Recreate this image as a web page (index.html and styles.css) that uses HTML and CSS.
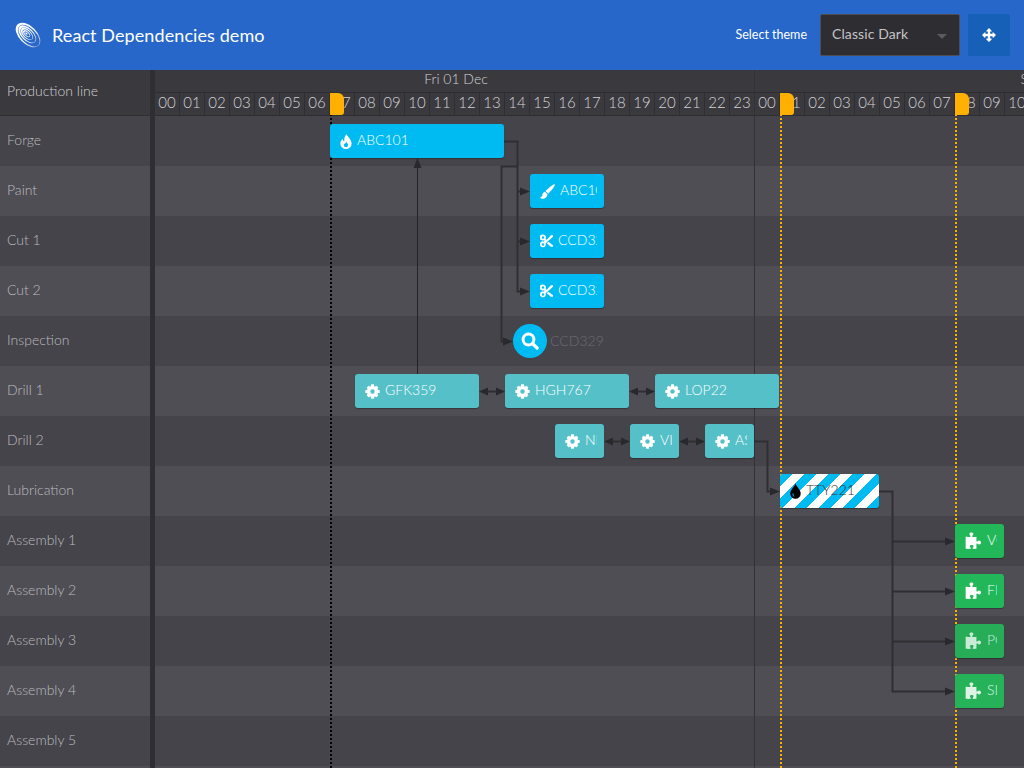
FILE: index.html
```html
<!DOCTYPE html>
<html lang="en">
<head>
<meta charset="utf-8">
<title>React Dependencies demo</title>
<link rel="stylesheet" href="styles.css">
</head>
<body>
<svg class="defs" aria-hidden="true">
  <defs>
    <linearGradient id="logoGrad" x1="0" y1="0" x2="1" y2="0">
      <stop offset="0" stop-color="#ffffff"/><stop offset="0.55" stop-color="#f2f5fa"/><stop offset="1" stop-color="#aab4c4"/>
    </linearGradient>
  </defs>
  <symbol id="i-fire" viewBox="0 0 22 28"><path fill-rule="evenodd" d="M12 0c1 5 9.500 9 9.500 18a10.500 10 0 0 1-21 0c0-4 2-7 4.500-9 0 3 1 4 3 5C7 9 9 3 12 0zM11 24.500a4 4 0 0 0 4-4c0-2-2.500-3.500-3.500-6-.5 2.500-4.500 3.500-4.500 6.500a4 4 0 0 0 4 3.500z"/></symbol>
  <symbol id="i-brush" viewBox="0 0 24 24"><path d="M23.200.5c.9.800.6 2-.2 3.200C20 8.500 15.800 13.300 13.200 15.500L8.800 11.300C11.800 8 17.300 3 20.800 1 21.800.3 22.700 0 23.200.5zM7.800 12.500l4.200 4c-.2 4.300-3.300 7-7 7-2.200 0-4.200-.8-5-2.400 1.600 0 3.300-.8 3.600-2.800.3-2.800 1.900-5.200 4.200-5.800z"/></symbol>
  <symbol id="i-cut" viewBox="0 0 24 24"><path fill-rule="evenodd" d="M5.500 0a5.500 5.500 0 0 1 4.700 8.300l2.400 1.500L20 1.500h4v2.500L10.500 16.300A5.500 5.500 0 1 1 7 12.800l1.800-1.300L7 10.500A5.500 5.500 0 1 1 5.500 0zM5.500 3.300a2.200 2.200 0 1 0 0 4.400 2.200 2.200 0 0 0 0-4.400zM5.500 16.300a2.200 2.200 0 1 0 0 4.400 2.200 2.200 0 0 0 0-4.400zM15.500 13.500L24 20v2.500h-4l-7.500-6.300z"/></symbol>
  <symbol id="i-search" viewBox="0 0 24 24"><circle cx="10" cy="10" r="7.200" fill="none" stroke="currentColor" stroke-width="4"/><path d="M15.500 15.500l6 6" fill="none" stroke="currentColor" stroke-width="4.400" stroke-linecap="round"/></symbol>
  <symbol id="i-cog" viewBox="0 0 24 24"><circle cx="12" cy="12" r="6.300" fill="none" stroke="currentColor" stroke-width="5.400"/><g fill="currentColor"><rect x="9.500" y="0.500" width="5" height="5" rx="1"/><rect x="9.500" y="18.500" width="5" height="5" rx="1"/><rect x="0.500" y="9.500" width="5" height="5" rx="1"/><rect x="18.500" y="9.500" width="5" height="5" rx="1"/><rect x="9.500" y="1" width="5" height="5" rx="1" transform="rotate(45 12 12)"/><rect x="9.500" y="18" width="5" height="5" rx="1" transform="rotate(45 12 12)"/><rect x="1" y="9.500" width="5" height="5" rx="1" transform="rotate(45 12 12)"/><rect x="18" y="9.500" width="5" height="5" rx="1" transform="rotate(45 12 12)"/></g></symbol>
  <symbol id="i-tint" viewBox="0 0 20 28"><path fill-rule="evenodd" d="M10 0c1.500 6 9.500 12 9.500 18.500a9.500 9.500 0 0 1-19 0C.5 12 8.500 6 10 0zM4.500 18c-.5 3.500 1.500 6 4 6.500-1.500-1.500-2.500-3.500-2-6z"/></symbol>
  <symbol id="i-puzzle" viewBox="0 0 26 26"><path d="M8.500 6C8.500 4.300 6.800 3.800 6.800 2.300 6.800 .8 8.300 0 9.800 0s3 .8 3 2.300c0 1.500-1.700 2-1.700 3.700 0 .9 2 1.100 6.400.6v6.400c.2 1 1 1 1.800.3.700-.6 1.400-1 2.300-1 1.600 0 2.900 1.300 2.900 3s-1.300 3-2.900 3c-.9 0-1.600-.4-2.300-1-.8-.7-1.600-.7-1.800.3v7.400c-3 .3-4.500.3-5.500 0-.8-.3-.5-1.200.2-2 .6-.7.900-1.200.900-1.800 0-1.200-1.300-1.900-2.800-1.900s-2.800.7-2.800 1.900c0 .6.300 1.100.9 1.800.7.800.9 1.700.1 2-1.500.3-4.500.3-7.500 0V6.600c3 .4 7.500.4 7.500-.6z"/></symbol>
  <symbol id="i-move" viewBox="0 0 24 24"><path d="M12 0l4.500 4.500a.8.800 0 0 1-.6 1.400H14V10h4.100V8.100a.8.800 0 0 1 1.400-.6L24 12l-4.500 4.500a.8.800 0 0 1-1.400-.6V14H14v4.100h1.900a.8.800 0 0 1 .6 1.400L12 24l-4.500-4.500a.8.800 0 0 1 .6-1.400H10V14H5.900v1.900a.8.800 0 0 1-1.400.6L0 12l4.500-4.500a.8.800 0 0 1 1.400.6V10H10V5.900H8.100a.8.800 0 0 1-.6-1.400z"/></symbol>
</svg>

<header class="topbar">
  <div class="brand">
    <svg class="logo" viewBox="0 0 28 28" aria-hidden="true">
      <path transform="rotate(45 14 14)" fill="url(#logoGrad)" fill-rule="evenodd" d="M-1 14a15 8.800 0 1 0 30 0a15 8.800 0 1 0-30 0zM1.600 14a13.400 7.400 0 1 0 26.800 0a13.400 7.400 0 1 0-26.800 0zM2 14a11 6.200 0 1 0 22 0a11 6.200 0 1 0-22 0zM4.600 14a9.400 5 0 1 0 18.800 0a9.400 5 0 1 0-18.800 0zM4.900 14a7.600 4.200 0 1 0 15.200 0a7.600 4.200 0 1 0-15.200 0zM7.100 14a6.200 3.200 0 1 0 12.400 0a6.200 3.200 0 1 0-12.400 0zM7.600 14a4.400 2.400 0 1 0 8.800 0a4.400 2.400 0 1 0-8.800 0zM9.400 14a3.200 1.500 0 1 0 6.400 0a3.200 1.500 0 1 0-6.400 0zM10.400 14a1.400 .8 0 1 0 2.800 0a1.400 .8 0 1 0-2.800 0z"/>
    </svg>
    <span class="title">React Dependencies demo</span>
  </div>
  <div class="controls">
    <span class="theme-label">Select theme</span>
    <div class="select"><span class="select-value">Classic Dark</span><i class="caret"></i></div>
    <div class="move-btn"><svg class="move-icon"><use href="#i-move"/></svg></div>
  </div>
</header>

<main class="gantt">
  <aside class="sidebar">
    <div class="side-head">Production line</div>
    <div class="side-row odd">Forge</div>
    <div class="side-row even">Paint</div>
    <div class="side-row odd">Cut 1</div>
    <div class="side-row even">Cut 2</div>
    <div class="side-row odd">Inspection</div>
    <div class="side-row even">Drill 1</div>
    <div class="side-row odd">Drill 2</div>
    <div class="side-row even">Lubrication</div>
    <div class="side-row odd">Assembly 1</div>
    <div class="side-row even">Assembly 2</div>
    <div class="side-row odd">Assembly 3</div>
    <div class="side-row even">Assembly 4</div>
    <div class="side-row odd">Assembly 5</div>
    <div class="side-row even"></div>
  </aside>
  <div class="divider"></div>
  <section class="timeline">
    <div class="dates">
      <div class="date">Fri 01 Dec</div>
      <div class="date">Sat 02 Dec</div>
    </div>
    <div class="hours">
      <div class="hour">00</div><div class="hour">01</div><div class="hour">02</div><div class="hour">03</div><div class="hour">04</div><div class="hour">05</div><div class="hour">06</div><div class="hour">07</div><div class="hour">08</div><div class="hour">09</div><div class="hour">10</div><div class="hour">11</div><div class="hour">12</div><div class="hour">13</div><div class="hour">14</div><div class="hour">15</div><div class="hour">16</div><div class="hour">17</div><div class="hour">18</div><div class="hour">19</div><div class="hour">20</div><div class="hour">21</div><div class="hour">22</div><div class="hour">23</div>
      <div class="hour">00</div><div class="hour">01</div><div class="hour">02</div><div class="hour">03</div><div class="hour">04</div><div class="hour">05</div><div class="hour">06</div><div class="hour">07</div><div class="hour">08</div><div class="hour">09</div><div class="hour">10</div>
    </div>
    <div class="lanes">
      <div class="lane odd"></div><div class="lane even"></div><div class="lane odd"></div><div class="lane even"></div><div class="lane odd"></div><div class="lane even"></div><div class="lane odd"></div><div class="lane even"></div><div class="lane odd"></div><div class="lane even"></div><div class="lane odd"></div><div class="lane even"></div><div class="lane odd"></div><div class="lane even"></div>
    </div>

    <div class="canvas">
      <div class="day-line" style="left:599px"></div>

      <div class="marker black" style="left:175px"></div>
      <div class="marker" style="left:625px"></div>
      <div class="marker" style="left:800px"></div>

      <svg class="links" viewBox="155 70 869 698" aria-hidden="true">
        <g class="wire">
          <path d="M504 141.500H517.500V291.500H522"/>
          <path d="M517 191.500H522M517 241.500H522"/>
          <path d="M517 166.500H501.500V341.500H505"/>
          <path d="M754 441.500H767.500V491.500H772"/>
          <path d="M879 491.500H892.500V691.500H947"/>
          <path d="M892 541.500H947M892 591.500H947M892 641.500H947"/>
          <path d="M484 391.500H500M634 391.500H650M609 441.500H625M684 441.500H700"/>
        </g>
        <path class="wire thin" d="M417.500 374V166"/>
        <g class="head">
          <path d="M530 191.500l-10-4v8zM530 241.500l-10-4v8zM530 291.500l-10-4v8zM513 341.500l-10-4v8z"/>
          <path d="M417.500 158l-4 10h8z"/>
          <path d="M780 491.500l-10-4v8zM955 541.500l-10-4v8zM955 591.500l-10-4v8zM955 641.500l-10-4v8zM955 691.500l-10-4v8z"/>
          <path d="M479 391.500l9-4v8zM505 391.500l-9-4v8zM629 391.500l9-4v8zM655 391.500l-9-4v8z"/>
          <path d="M604 441.500l9-4v8zM630 441.500l-9-4v8zM679 441.500l9-4v8zM705 441.500l-9-4v8z"/>
        </g>
      </svg>

      <div class="bar blue" style="left:175px;top:54px;width:174px"><svg class="ico fire"><use href="#i-fire"/></svg><span class="txt">ABC101</span></div>
      <div class="bar blue" style="left:375px;top:104px;width:74px"><svg class="ico brush"><use href="#i-brush"/></svg><span class="txt">ABC102</span></div>
      <div class="bar blue" style="left:375px;top:154px;width:74px"><svg class="ico cut"><use href="#i-cut"/></svg><span class="txt">CCD329</span></div>
      <div class="bar blue" style="left:375px;top:204px;width:74px"><svg class="ico cut"><use href="#i-cut"/></svg><span class="txt">CCD329</span></div>

      <div class="milestone" style="left:358px;top:254px">
        <div class="dot"><svg class="ico search"><use href="#i-search"/></svg></div>
        <span class="mile-txt">CCD329</span>
      </div>

      <div class="bar teal" style="left:200px;top:304px;width:124px"><svg class="ico cog"><use href="#i-cog"/></svg><span class="txt">GFK359</span></div>
      <div class="bar teal" style="left:350px;top:304px;width:124px"><svg class="ico cog"><use href="#i-cog"/></svg><span class="txt">HGH767</span></div>
      <div class="bar teal" style="left:500px;top:304px;width:124px"><svg class="ico cog"><use href="#i-cog"/></svg><span class="txt">LOP22</span></div>
      <div class="bar teal" style="left:400px;top:354px;width:49px"><svg class="ico cog"><use href="#i-cog"/></svg><span class="txt">NMK12</span></div>
      <div class="bar teal" style="left:475px;top:354px;width:49px"><svg class="ico cog"><use href="#i-cog"/></svg><span class="txt">VIK34</span></div>
      <div class="bar teal" style="left:550px;top:354px;width:49px"><svg class="ico cog"><use href="#i-cog"/></svg><span class="txt">ASD56</span></div>

      <div class="bar striped" style="left:625px;top:404px;width:99px"><svg class="ico tint"><use href="#i-tint"/></svg><span class="txt">TTY221</span></div>

      <div class="bar green" style="left:800px;top:454px;width:49px"><svg class="ico puzzle"><use href="#i-puzzle"/></svg><span class="txt">VGH1</span></div>
      <div class="bar green" style="left:800px;top:504px;width:49px"><svg class="ico puzzle"><use href="#i-puzzle"/></svg><span class="txt">FIL2</span></div>
      <div class="bar green dim" style="left:800px;top:554px;width:49px"><svg class="ico puzzle"><use href="#i-puzzle"/></svg><span class="txt">POL3</span></div>
      <div class="bar green soft" style="left:800px;top:604px;width:49px"><svg class="ico puzzle"><use href="#i-puzzle"/></svg><span class="txt">SIL4</span></div>
    </div>
  </section>
</main>
</body>
</html>
```

FILE: styles.css
```css
html, body {
  margin: 0;
  height: 100%;
  overflow: hidden;
}
body {
  font-family: "Lato", "Liberation Sans", sans-serif;
  background: #45444a;
  display: flex;
  flex-direction: column;
}
.defs {
  position: absolute;
  width: 0;
  height: 0;
}

/* Top bar */
.topbar {
  flex: none;
  height: 70px;
  background: #2767c9;
  display: flex;
  align-items: center;
  justify-content: space-between;
  padding: 0 14px;
  color: #fff;
}
.brand {
  display: flex;
  align-items: center;
  gap: 10px;
}
.logo {
  width: 28px;
  height: 28px;
}
.title {
  font-size: 18px;
  line-height: 28px;
  letter-spacing: .09px;
}
.controls {
  display: flex;
  align-items: center;
}
.theme-label {
  font-size: 12.500px;
  margin: 0 13px 2px 0;
}
.select {
  box-sizing: border-box;
  width: 140px;
  height: 42px;
  background: #2e2d32;
  border: 1px solid #4d4d52;
  border-radius: 2px;
  color: #c4c4c6;
  font-size: 14px;
  display: flex;
  align-items: center;
  justify-content: space-between;
  padding: 0 12px 0 11px;
}
.select-value {
  margin-bottom: 3px;
  letter-spacing: .1px;
}
.caret {
  width: 0;
  height: 0;
  border-left: 5.500px solid transparent;
  border-right: 5.500px solid transparent;
  border-top: 5.500px solid #5b5a5f;
  margin-top: 3px;
}
.move-btn {
  width: 42px;
  height: 42px;
  margin-left: 8px;
  background: #1660b8;
  border-radius: 2px;
  display: flex;
  align-items: center;
  justify-content: center;
}
.move-icon {
  width: 14px;
  height: 14px;
  fill: #fff;
}

/* Gantt layout */
.gantt {
  flex: 1;
  min-height: 0;
  display: flex;
  overflow: hidden;
}
.sidebar {
  flex: none;
  width: 150px;
}
.side-head {
  box-sizing: border-box;
  height: 46px;
  background: #3a393e;
  border-bottom: 1px solid #2f2e32;
  color: #d2d2d4;
  font-size: 14px;
  font-weight: 300;
  line-height: 42px;
  padding-left: 7px;
}
.side-row {
  height: 50px;
  line-height: 47px;
  padding-left: 7px;
  color: #bcbcbf;
  font-size: 14px;
  font-weight: 300;
}
.odd { background: #45444a; }
.even { background: #4f4e54; }
.divider {
  flex: none;
  width: 5px;
  background: #2f2e32;
}
.timeline {
  flex: 1;
  min-width: 0;
  position: relative;
  overflow: hidden;
}
.dates {
  display: flex;
  height: 22px;
  background: #3a393e;
}
.date {
  flex: none;
  box-sizing: border-box;
  width: 600px;
  padding-left: 2px;
  text-align: center;
  color: #d2d2d4;
  font-size: 14px;
  font-weight: 300;
  line-height: 17px;
}
.date + .date {
  padding: 0 2px 0 0;
}
.hours {
  display: flex;
  box-sizing: border-box;
  height: 24px;
  background: #3a393e;
  border-top: 1px solid #2f2e32;
  border-bottom: 1px solid #2f2e32;
}
.hour {
  flex: none;
  box-sizing: border-box;
  width: 25px;
  border-right: 1px solid #2f2e32;
  color: #d4d4d6;
  font-size: 15px;
  font-weight: 300;
  line-height: 19px;
  text-align: center;
}
.lane {
  height: 50px;
}

/* Overlay canvas: items sit at their time / lane coordinates */
.canvas {
  position: absolute;
  inset: 0;
}
.day-line {
  position: absolute;
  top: 0;
  bottom: 0;
  width: 1px;
  background: #333237;
}
.marker {
  position: absolute;
  top: 23px;
  bottom: 0;
  border-left: 2px dotted #ffb000;
}
.marker::before {
  content: "";
  position: absolute;
  left: -2px;
  top: 0;
  width: 14px;
  height: 22px;
  background: #ffb000;
  border-radius: 0 6px 3px 0;
}
.marker.black {
  border-left-color: #000;
}
.links {
  position: absolute;
  left: 0;
  top: 0;
  width: 869px;
  height: 698px;
}
.wire {
  fill: none;
  stroke: #2f2e33;
  stroke-width: 2;
}
.wire.thin {
  stroke: #232226;
  stroke-width: 1;
}
.head {
  fill: #29282c;
}

.bar {
  position: absolute;
  box-sizing: border-box;
  height: 34px;
  display: flex;
  align-items: center;
  gap: 5px;
  padding: 0 7px 0 10px;
  border-radius: 3px;
  box-shadow: 0 1px 1px rgba(0, 0, 0, .3);
  color: #fff;
}
.blue { background: #00bbf2; }
.teal { background: #56c0c8; }
.green { background: #22b85a; }
.green.dim { background: #27ad57; }
.green.soft { background: #25b259; }
.dim .txt, .dim .ico { opacity: .75; }
.soft .txt, .soft .ico { opacity: .85; }
.striped {
  background: repeating-linear-gradient(135deg, #00bbf2 0, #00bbf2 8.500px, #fff 8.500px, #fff 17px);
  color: #333;
}
.striped .ico { color: #000; }
.ico {
  flex: none;
  height: 15px;
  fill: currentColor;
  color: inherit;
}
.fire { width: 12px; }
.brush { width: 15px; height: 15px; }
.cut { width: 13px; height: 14px; }
.cog { width: 15px; }
.tint { width: 11px; height: 16px; }
.puzzle { width: 17px; height: 18px; }
.txt {
  min-width: 0;
  margin-bottom: 4px;
  overflow: hidden;
  white-space: nowrap;
  font-size: 14px;
  font-weight: 300;
}
.milestone {
  position: absolute;
  height: 34px;
  display: flex;
  align-items: center;
  gap: 3px;
}
.dot {
  width: 34px;
  height: 34px;
  border-radius: 50%;
  background: #00bbf2;
  color: #fff;
  display: flex;
  align-items: center;
  justify-content: center;
}
.search {
  width: 18px;
  height: 18px;
}
.mile-txt {
  color: #6d6c71;
  margin-bottom: 2px;
  font-size: 14px;
  font-weight: 300;
}
```
